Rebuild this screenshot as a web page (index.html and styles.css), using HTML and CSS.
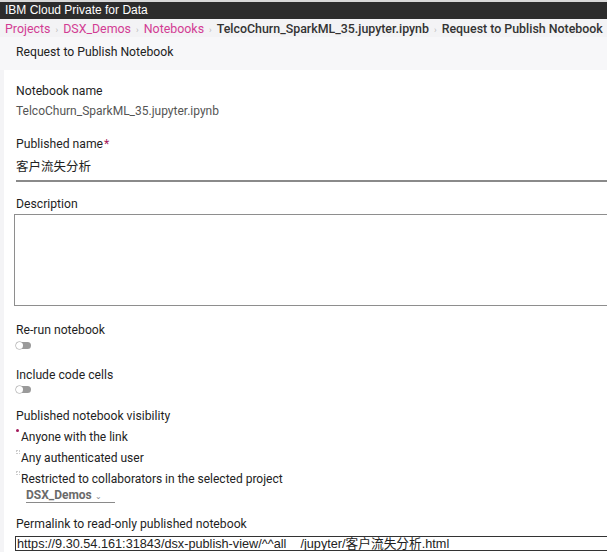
FILE: index.html
```html
<!DOCTYPE html>
<html>
<head>
<meta charset="utf-8">
<link rel="stylesheet" href="styles.css">
</head>
<body>
<div class="topbar">IBM Cloud Private for Data</div>
<nav class="crumbs">
  <a class="crumb-link">Projects</a><span class="sep">›</span>
  <a class="crumb-link">DSX_Demos</a><span class="sep">›</span>
  <a class="crumb-link">Notebooks</a><span class="sep">›</span>
  <span class="crumb-cur">TelcoChurn_SparkML_35.jupyter.ipynb</span><span class="sep">›</span>
  <span class="crumb-cur">Request to Publish Notebook</span>
</nav>
<div class="page">
  <div class="page-title">Request to Publish Notebook</div>
  <div class="form">
    <div class="label l-first">Notebook name</div>
    <div class="value">TelcoChurn_SparkML_35.jupyter.ipynb</div>

    <div class="label l-pub">Published name<span class="req">*</span></div>
    <div class="text-input">客户流失分析</div>

    <div class="label l-desc">Description</div>
    <div class="textarea"></div>

    <div class="label l-rerun">Re-run notebook</div>
    <div class="toggle t-rerun"><span class="knob"></span></div>

    <div class="label l-code">Include code cells</div>
    <div class="toggle t-code"><span class="knob"></span></div>

    <div class="label l-vis">Published notebook visibility</div>
    <div class="radio"><span class="dot dot-on"></span>Anyone with the link</div>
    <div class="radio"><span class="dot dot-off"></span>Any authenticated user</div>
    <div class="radio r-last"><span class="dot dot-off"></span>Restricted to collaborators in the selected project</div>
    <div class="select">DSX_Demos <span class="caret">⌄</span></div>

    <div class="label l-perma">Permalink to read-only published notebook</div>
    <div class="perma">https://9.30.54.161:31843/dsx-publish-view/^^all__/jupyter/客户流失分析.html</div>
  </div>
</div>
</body>
</html>
```
FILE: styles.css
```css
html, body {
  margin: 0;
  padding: 0;
  background: #f4f4f6;
  overflow: hidden;
}
body {
  font-family: "Roboto", "Noto Sans CJK SC", sans-serif;
  color: #222;
  width: 607px;
  height: 552px;
}
.topbar {
  border-top: 2px solid #d8d8d8;
  background: #2c2c2c;
  color: #fff;
  height: 17px;
  line-height: 17px;
  padding-left: 5px;
  font-family: "Liberation Sans", Arial, sans-serif;
  font-size: 12px;
}
.crumbs {
  height: 17px;
  padding-top: 1px;
  line-height: 18px;
  padding-left: 5px;
  background: #f3f3f5;
  font-size: 12.4px;
  white-space: nowrap;
  display: flex;
  align-items: center;
}
.crumb-link {
  color: #d23c93;
}
.crumb-cur {
  color: #333;
  font-weight: 500;
}
.sep {
  color: #bbb;
  font-size: 9px;
  margin: 0 5px;
  position: relative;
  top: 1px;
}
.page {
  background: #f4f4f6;
}
.page-title {
  height: 33px;
  line-height: 30px;
  padding-left: 16px;
  font-size: 12.2px;
  color: #222;
  background: #f7f7f9;
}
.form {
  margin-left: 4px;
  background: #fff;
  padding-left: 12px;
  height: 482px;
  overflow: hidden;
  font-size: 12.2px;
}
.label {
  line-height: 18px;
  height: 18px;
  color: #1f1f1f;
}
.l-first { padding-top: 12px; }
.value {
  margin-top: 2px;
  line-height: 18px;
  font-size: 12px;
  color: #555;
}
.l-pub { margin-top: 15px; }
.req { color: #a3195b; margin-left: 1px; }
.text-input {
  margin-top: 5px;
  line-height: 18px;
  padding-bottom: 4px;
  border-bottom: 2px solid #8a8a8a;
  font-size: 12.5px;
}
.l-desc { margin-top: 13px; }
.textarea {
  margin-top: 1px;
  margin-left: -2px;
  height: 90px;
  border: 1px solid #8e8e8e;
  border-right: none;
}
.l-rerun { margin-top: 15px; }
.toggle {
  width: 15px;
  height: 7px;
  border-radius: 4px;
  background: #9a9a9a;
  position: relative;
}
.knob {
  position: absolute;
  left: 0;
  top: 0;
  width: 7px;
  height: 7px;
  border-radius: 50%;
  background: #fff;
  box-shadow: 0 0 0 0.5px #999;
}
.t-rerun { margin-top: 3px; }
.l-code { margin-top: 17px; }
.t-code { margin-top: 2px; }
.l-vis { margin-top: 14px; }
.radio {
  margin-top: 3px;
  line-height: 18px;
  height: 18px;
  padding-left: 5px;
  position: relative;
  font-size: 12px;
}
.r-last { height: 17px; }
.dot {
  position: absolute;
  left: 0;
  top: 1px;
  width: 3px;
  height: 3px;
}
.dot-on { background: #a3195b; border-radius: 50%; }
.dot-off { border: 1px dotted #ccc; width: 2px; height: 2px; }
.select {
  margin-left: 10px;
  width: 89px;
  height: 15px;
  line-height: 16px;
  border-bottom: 1px solid #8a8a8a;
  color: #6a6a6a;
  font-weight: 700;
  font-size: 12px;
}
.caret { font-size: 8px; color: #888; font-weight: 400; }
.l-perma { margin-top: 12px; }
.perma {
  margin-top: 3px;
  margin-left: -1px;
  height: 13px;
  line-height: 15px;
  border: 1px solid #333;
  border-right: none;
  font-family: "Liberation Sans", Arial, "Noto Sans CJK SC", sans-serif;
  font-size: 12.7px;
  color: #222;
  white-space: nowrap;
  overflow: hidden;
  padding-left: 1px;
}
```
